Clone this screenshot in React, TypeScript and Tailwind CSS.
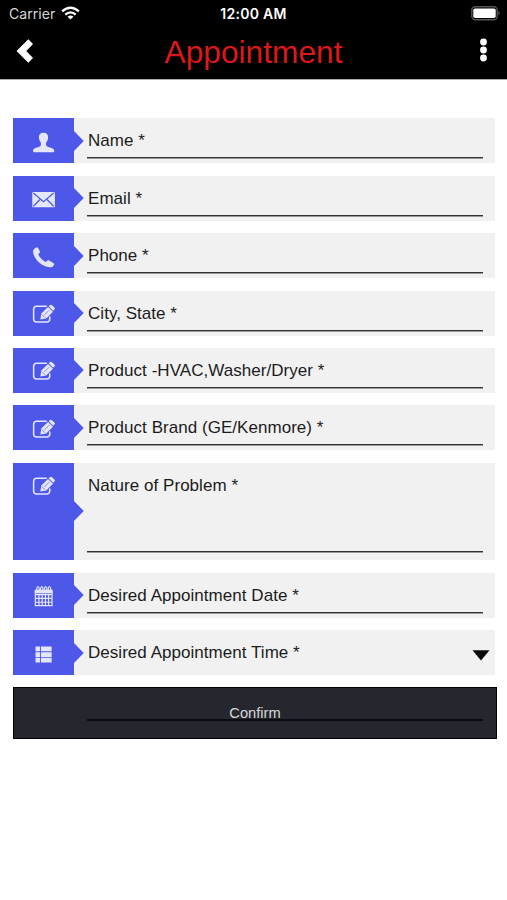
import { FC, ReactNode } from 'react';

type IconName = 'user' | 'mail' | 'phone' | 'edit' | 'calendar' | 'list';

interface Field {
  label: string;
  icon: IconName;
  type?: 'textarea' | 'select';
}

const fields: Field[] = [
  { label: 'Name *', icon: 'user' },
  { label: 'Email *', icon: 'mail' },
  { label: 'Phone *', icon: 'phone' },
  { label: 'City, State *', icon: 'edit' },
  { label: 'Product -HVAC,Washer/Dryer *', icon: 'edit' },
  { label: 'Product Brand (GE/Kenmore) *', icon: 'edit' },
  { label: 'Nature of Problem *', icon: 'edit', type: 'textarea' },
  { label: 'Desired Appointment Date *', icon: 'calendar' },
  { label: 'Desired Appointment Time *', icon: 'list', type: 'select' },
];

// All drawn on a 24x24 grid
const icons: Record<IconName, ReactNode> = {
  user: (
    <path
      fill="currentColor"
      d="M12 1.700c3.200 0 5 1.900 4.800 4.800-.1 2.700-1 4.400-2.100 5.600v2.700c.4 1.300 2.500 1.700 5 2.600 2 .8 3.300 1.400 3.500 2.900v.9q0 .9-.9.9H2q-.9 0-.9-.9v-.9c.2-1.500 1.200-2.100 3.200-2.900 2.500-.9 4.600-1.300 5-2.600v-2.700c-1-1.200-2-2.900-2.100-5.600C7 3.600 8.800 1.700 12 1.700z"
    />
  ),
  mail: (
    <>
      <rect x="0.300" y="4.200" width="23.600" height="16" rx="1" fill="currentColor" />
      <path
        fill="none"
        stroke="#4d57e8"
        strokeWidth="1.300"
        d="M1.500 5.300 12 14.200 22.600 5.300M1.500 19 8.600 11.800M22.600 19 15.400 11.800"
      />
    </>
  ),
  phone: (
    <path
      fill="currentColor"
      d="M2.200 3 4.500 1.500c.6-.4 1.300-.2 1.700.4l2 3.600c.4.7.2 1.300-.4 1.700L6.600 8.400c.6 2.700 4.500 6.800 7.600 8.200l1.800-1.300c.6-.5 1.200-.5 1.800-.1l4.800 2.700c.7.4.9 1 .4 1.700l-1 1.500c-.7 1-2.500 1.400-4.900.9C10 21.100 2.500 14 1.300 7.200.9 5 1.200 3.700 2.200 3z"
    />
  ),
  edit: (
    <>
      <path
        fill="none"
        stroke="currentColor"
        strokeWidth="1.600"
        strokeLinecap="round"
        d="M15 3.300H4.900Q1.700 3.300 1.700 6.500v10.200Q1.700 19.900 4.900 19.900h10.400q3.200 0 3.200-3.200v-2.200"
      />
      <path fill="currentColor" d="m8.700 17.300 1-6.300 7-6.900 5.200 5.100-7 6.900zM17.400 3.500l1.500-1.400q.9-.7 1.700.1l3 2.800q.7.8 0 1.600l-1.500 1.500z" />
      <path fill="none" stroke="#4d57e8" strokeWidth="0.700" d="m10.500 12.300 3 3M12.900 12.500 17.900 7.500" />
    </>
  ),
  calendar: (
    <>
      <path
        fill="none"
        stroke="currentColor"
        strokeWidth="1.250"
        d="M3.500 6h17.400v15.600H3.500zM3.500 10h17.400M3.500 14h17.400M3.500 18h17.400M7.200 9v12.500M10.600 9v12.500M14 9v12.500M17.300 9v12.500"
      />
      <path fill="currentColor" d="M2.900 4.900h18.600v3.800H2.900z" />
      <path
        fill="none"
        stroke="currentColor"
        strokeWidth="1.200"
        d="M5 6V3q1.200-2.500 2.400 0v3M9 6V3q1.200-2.500 2.400 0v3M13 6V3q1.200-2.500 2.400 0v3M17 6V3q1.200-2.500 2.400 0v3"
      />
    </>
  ),
  list: (
    <path
      fill="currentColor"
      d="M3.700 3.700h4.600v4.900H3.700zM9.300 3.700h11.200v4.900H9.300zM3.700 9.600h4.600v4.900H3.700zM9.300 9.600h11.200v4.900H9.300zM3.700 15.500h4.600v4.900H3.700zM9.300 15.500h11.200v4.900H9.300z"
    />
  ),
};

const StatusBar: FC = () => (
  <div className="grid h-[27px] grid-cols-3 items-center font-['Inter','Liberation_Sans',sans-serif] text-white">
    <div className="flex items-center gap-[6px] pl-[9px]">
      <span className="text-[14.100px] leading-[27px] text-[#d5d5d5]">Carrier</span>
      <svg viewBox="0 0 20 14" className="-mt-[2px] h-[14px] w-[19px]">
        <g fill="none" stroke="currentColor" strokeWidth="2.500">
          <path d="M1.200 5.200Q10-2.400 18.800 5.200" />
          <path d="M4.500 8.700Q10 4 15.500 8.700" />
        </g>
        <path fill="currentColor" d="M10 13.900 6.900 10.900Q10 8.400 13.100 10.900z" />
      </svg>
    </div>
    <div className="text-center text-[14px] font-semibold leading-[27px] tracking-[0.300px]">12:00 AM</div>
    <div className="-mt-px flex justify-end pr-[6px]">
      <svg viewBox="0 0 30 15" className="h-[15px] w-[30px]">
        <rect x="0.800" y="0.800" width="25.400" height="12.900" rx="3.500" fill="none" stroke="#555" strokeWidth="1.400" />
        <rect x="2.300" y="2.400" width="22.400" height="9.700" rx="1.800" fill="#fff" />
        <path fill="#666" d="M27.500 5q2.500 2.200 0 4.500z" />
      </svg>
    </div>
  </div>
);

const Header: FC = () => (
  <header className="h-[80px] border-b border-[#aaa] bg-black">
    <StatusBar />
    <div className="flex h-[50px] items-center justify-between pl-4 pr-5">
      <button aria-label="Back" className="-mt-[2px] text-white">
        <svg viewBox="0 0 18 24" className="h-6 w-[18px]">
          <path fill="currentColor" d="M12.300.300 17 5 10.300 12 17 19 12.300 23.700.500 12z" />
        </svg>
      </button>
      <h1 className="mr-[7px] text-[31.700px] leading-[50px] text-[#dc1818]">Appointment</h1>
      <button aria-label="Menu" className="-mt-1 text-white">
        <svg viewBox="0 0 7 24" className="h-6 w-[7px]">
          <circle cx="3.500" cy="4" r="3.400" fill="currentColor" />
          <circle cx="3.500" cy="12" r="3.400" fill="currentColor" />
          <circle cx="3.500" cy="20" r="3.400" fill="currentColor" />
        </svg>
      </button>
    </div>
  </header>
);

const FieldRow: FC<{ field: Field }> = ({ field }) => {
  const isTextarea = field.type === 'textarea';
  const isSelect = field.type === 'select';

  return (
    <div className={`relative flex w-[482px] bg-[#f1f1f1] ${isTextarea ? 'h-[97.500px]' : 'h-[45px]'}`}>
      <div className="w-[61px] bg-[#4d57e8] pl-[19px] pt-[12.500px] text-[#e4e6fb]">
        <svg viewBox="0 0 24 24" className="size-[23px]">
          {icons[field.icon]}
        </svg>
      </div>
      <div className="w-[10px] self-center">
        <svg viewBox="0 0 10 20" className="h-5 w-[10px]">
          <path fill="#4d57e8" d="M0 0 9.700 10 0 20z" />
        </svg>
      </div>
      <div className={`ml-[3px] flex w-[396px] flex-col justify-between ${isTextarea ? 'pb-[7px]' : 'pb-[4px]'}`}>
        <span className="pl-px pt-[11px] text-[17px] leading-[24px] tracking-[0.040px] text-[#1c1c1c]">
          {field.label}
        </span>
        {!isSelect && <div className="h-[2px] border-t border-[#333] bg-[#999]" />}
      </div>
      {isSelect && (
        <svg viewBox="0 0 18 11" className="absolute right-[5px] top-[20px] h-[11px] w-[18px]">
          <path fill="#0a0a0a" d="M.500.300h17L9 10.500z" />
        </svg>
      )}
    </div>
  );
};

const App: FC = () => {
  return (
    <div className="h-[900px] w-[507px] overflow-hidden bg-white font-['Liberation_Sans',Arial,sans-serif]">
      <Header />
      <form className="flex flex-col gap-[12.420px] pl-[13px] pt-[38.300px]">
        {fields.map((field) => (
          <FieldRow key={field.label} field={field} />
        ))}
        <button
          type="button"
          className="relative h-[51.500px] w-[484px] border border-black bg-[#26272e] text-[14.700px] text-[#d6d6d6]"
        >
          Confirm
          <span className="absolute left-[73px] top-[31px] h-[1.500px] w-[396px] bg-[#0c0c0f]" />
        </button>
      </form>
    </div>
  );
};

export default App;
